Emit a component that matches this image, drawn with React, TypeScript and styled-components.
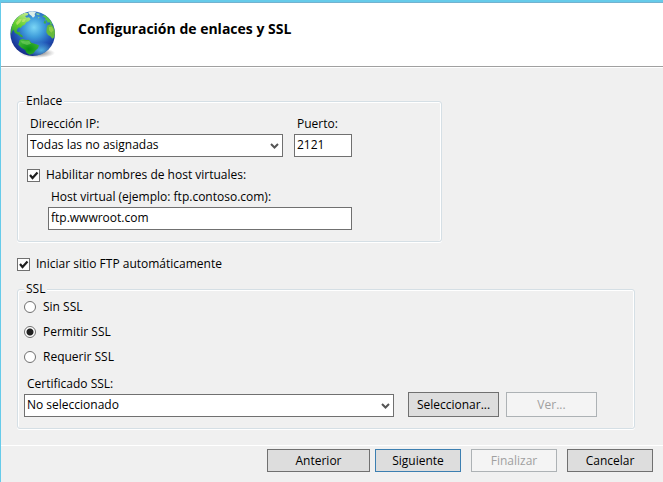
import React, { useId } from "react";
import styled, { createGlobalStyle } from "styled-components";

const GlobalStyle = createGlobalStyle`
  *, *::before, *::after { box-sizing: border-box; }
  html, body, #root { height: 100%; }
  body {
    margin: 0;
    background: #f0f0f0;
    color: #000;
    font: 12px/16px "Open Sans", "Noto Sans", sans-serif;
  }
  button, input, select { font: inherit; color: inherit; margin: 0; }
`;

const Dialog = styled.main`
  min-height: 100%;
  display: flex;
  flex-direction: column;
  border-top: 2px solid #66cbea;
  border-left: 1px solid #66cbea;
  background: #f0f0f0;
`;

const Header = styled.header`
  display: flex;
  align-items: flex-start;
  gap: 22px;
  height: 65px;
  padding: 6px 7px 0;
  background: #fff;
  border-top: 1px solid #74b2cf;
  border-bottom: 1px solid #a0a0a0;
  box-shadow: 0 1px 0 #fff;
`;

const Title = styled.h1`
  margin: 0;
  padding-top: 11px;
  font: 700 14px/18px "Open Sans", "Noto Sans", sans-serif;
`;

const Content = styled.form`
  flex: 1;
  display: flex;
  flex-direction: column;
  align-items: flex-start;
  padding: 26px 28px 16px 16px;
`;

const Group = styled.fieldset<{ $limit?: string }>`
  width: 100%;
  max-width: ${(p) => p.$limit ?? "none"};
  min-width: 0;
  margin: 0;
  padding: 0;
  border: 1px solid #d5dfe5;
  border-radius: 3px;
  box-shadow: inset 1px 1px 0 #fff, inset -1px 0 0 #fff, 0 1px 0 #fff;
`;

const Legend = styled.legend`
  margin-left: 6px;
  padding: 0 2px;
  background: #f0f0f0;
`;

const BindingFields = styled.div`
  display: flex;
  flex-direction: column;
  width: 334px;
  max-width: 100%;
  padding: 7px 0 11px 9px;
`;

const AddressRow = styled.div`
  display: grid;
  grid-template-columns: 1fr 58px;
  column-gap: 11px;
  margin-bottom: 10px;
`;

const Field = styled.div<{ $indent?: string; $tight?: boolean }>`
  display: flex;
  flex-direction: column;
  gap: ${(p) => (p.$tight ? "0" : "2px")};
  min-width: 0;
  padding-left: ${(p) => p.$indent ?? "0"};
`;

const FieldLabel = styled.label`
  padding-left: 3px;
  white-space: nowrap;
`;

const TextBox = styled.input`
  width: 100%;
  height: 23px;
  padding: 0 2px 2px;
  border: 1px solid #707070;
  border-radius: 0;
  background: #fff;
`;

const SelectFrame = styled.div`
  display: grid;
  align-items: center;
  min-width: 0;

  > * { grid-area: 1 / 1; }
  > svg { justify-self: end; margin-right: 4px; pointer-events: none; }
`;

const SelectBox = styled.select`
  appearance: none;
  width: 100%;
  height: 23px;
  padding: 0 16px 1px 2px;
  border: 1px solid #707070;
  border-radius: 0;
  background: #fff;
`;

const ChoiceLabel = styled.label`
  display: inline-flex;
  align-items: center;
  gap: 6px;
  white-space: nowrap;
`;

const HostToggle = styled.div`
  display: flex;
  margin-bottom: 6px;
`;

const CheckMark = styled.span`
  display: grid;
  width: 13px;
  height: 13px;

  > * { grid-area: 1 / 1; }
  > svg { pointer-events: none; visibility: hidden; }
  > input:checked + svg { visibility: visible; }
`;

const CheckInput = styled.input`
  appearance: none;
  width: 13px;
  height: 13px;
  border: 1px solid #707070;
  background: #fff;
`;

const RadioInput = styled.input`
  appearance: none;
  width: 12px;
  height: 12px;
  border: 1px solid #707070;
  border-radius: 50%;
  background: #fff;

  &:checked { background: radial-gradient(circle, #202020 3px, #fff 4px); }
`;

const AutoStart = styled.div`
  display: flex;
  margin: 14px 0 9px;
`;

const SslFields = styled.div`
  display: flex;
  flex-direction: column;
  padding: 0 37px 11px 6px;
`;

const RadioList = styled.div`
  display: flex;
  flex-direction: column;
  align-items: flex-start;
  gap: 9px;
  margin: 2px 0 11px;

  ${ChoiceLabel} { gap: 7px; }
`;

const CertificateRow = styled.div`
  display: flex;
  align-items: flex-end;
  gap: 7px;

  > ${SelectFrame} { flex: 1; margin-right: 7px; }
`;

const Button = styled.button<{ $width: string; $primary?: boolean; $tall?: boolean }>`
  width: ${(p) => p.$width};
  height: ${(p) => (p.$tall ? "25px" : "23px")};
  padding: 0;
  border: 1px solid ${(p) => (p.$primary ? "#3c7fb1" : "#707070")};
  border-radius: 0;
  background: #ddd;
  white-space: nowrap;

  &:disabled {
    border-color: #adb2b5;
    background: #f4f4f4;
    color: #a0a0a0;
  }
`;

const Footer = styled.footer`
  display: flex;
  justify-content: flex-end;
  gap: 10px;
  padding: 3px 10px 10px;
  border-top: 1px solid #fff;
`;

const StepButtons = styled.div`
  display: flex;
  gap: 5px;
`;

function Globe() {
  return (
    <svg width="48" height="50" viewBox="24 27 144 150" aria-hidden="true">
      <defs>
        <radialGradient id="sea" cx="0.53" cy="0.36" r="0.62">
          <stop offset="0" stopColor="#7bd6f5" />
          <stop offset="0.35" stopColor="#3f9ddb" />
          <stop offset="0.7" stopColor="#2156b8" />
          <stop offset="1" stopColor="#182f8c" />
        </radialGradient>
        <linearGradient id="north" x1="0.6" y1="0" x2="0.2" y2="1">
          <stop offset="0" stopColor="#b5e683" />
          <stop offset="0.5" stopColor="#63cf2d" />
          <stop offset="1" stopColor="#249638" />
        </linearGradient>
        <radialGradient id="south" cx="0.5" cy="0.65" r="0.65">
          <stop offset="0" stopColor="#078d12" />
          <stop offset="1" stopColor="#43b93a" />
        </radialGradient>
        <radialGradient id="glow">
          <stop offset="0" stopColor="#5bc9ef" stopOpacity="0.8" />
          <stop offset="1" stopColor="#5bc9ef" stopOpacity="0" />
        </radialGradient>
        <radialGradient id="shade">
          <stop offset="0" stopColor="#333" stopOpacity="0.75" />
          <stop offset="1" stopColor="#555" stopOpacity="0" />
        </radialGradient>
        <clipPath id="disc"><circle cx="98" cy="101" r="67" /></clipPath>
      </defs>
      <ellipse cx="111" cy="159" rx="54" ry="15" fill="url(#shade)" />
      <circle cx="98" cy="101" r="67" fill="url(#sea)" />
      <g clipPath="url(#disc)">
        <ellipse cx="124" cy="151" rx="42" ry="25" fill="url(#glow)" />
        <path d="M33 104 L34 79 L43 61 L58 45 L75 38 L86 40 L83 46 L75 48 L80 53 L87 52 L92 58 L86 64 L79 67 L74 74 L67 77 L62 84 L57 82 L52 87 L50 94 L55 97 L61 96 L59 102 L66 105 L69 112 L63 111 L55 104 L45 99 L40 89 L37 94 Z" fill="url(#north)" />
        <path d="M48 68 L58 57 L66 56 L61 66 L51 76 Z M68 56 L78 57 L73 66 L66 66 Z" fill="#c1e66e" opacity="0.75" />
        <path d="M85 36 L97 32 L108 37 L104 42 L105 48 L99 53 L94 47 L88 43 Z" fill="#dceee8" />
        <path d="M109 39 L119 41 L118 46 L110 44 Z M113 50 L119 52 L116 56 Z" fill="#84ce90" />
        <path d="M126 48 L137 45 L151 59 L158 74 L151 73 L148 66 L143 68 L140 61 L134 62 L137 55 Z" fill="#55c34a" />
        <path d="M133 62 L139 65 L136 72 L131 69 Z" fill="#3cad46" />
        <path d="M143 76 L151 73 L158 77 L166 94 L163 112 L157 116 L151 109 L144 105 L139 97 L140 85 Z" fill="#66ba3b" />
        <path d="M147 81 L156 80 L161 91 L154 98 L147 91 Z" fill="#a3d74f" opacity="0.7" />
        <path d="M59 120 L67 117 L78 120 L87 119 L94 128 L104 131 L117 136 L114 145 L107 151 L100 160 L89 164 L80 159 L75 149 L64 143 L55 134 Z" fill="url(#south)" />
        <path d="M62 122 L77 124 L88 123 L93 131 L81 135 L66 130 Z" fill="#86d76d" opacity="0.5" />
      </g>
    </svg>
  );
}

function Chevron() {
  return (
    <svg width="9" height="8" viewBox="0 0 9 8" aria-hidden="true">
      <path d="M1 2 L4.5 5.5 L8 2" fill="none" stroke="#555" strokeWidth="2" />
    </svg>
  );
}

function Checkbox({ label }: { label: string }) {
  return (
    <ChoiceLabel>
      <CheckMark>
        <CheckInput type="checkbox" defaultChecked />
        <svg width="13" height="13" viewBox="0 0 13 13" aria-hidden="true">
          <path d="M3 6 L5.5 9 L10.5 3.5" fill="none" stroke="#202020" strokeWidth="2.2" />
        </svg>
      </CheckMark>
      {label}
    </ChoiceLabel>
  );
}

function Dropdown({ id, value }: { id: string; value: string }) {
  return (
    <SelectFrame>
      <SelectBox id={id} defaultValue={value}>
        <option>{value}</option>
      </SelectBox>
      <Chevron />
    </SelectFrame>
  );
}

const sslModes = ["Sin SSL", "Permitir SSL", "Requerir SSL"];

export default function App() {
  const id = useId();
  return (
    <>
      <GlobalStyle />
      <Dialog>
        <Header>
          <Globe />
          <Title>Configuración de enlaces y SSL</Title>
        </Header>
        <Content>
          <Group $limit="425px">
            <Legend>Enlace</Legend>
            <BindingFields>
              <AddressRow>
                <Field>
                  <FieldLabel htmlFor={`${id}-ip`}>Dirección IP:</FieldLabel>
                  <Dropdown id={`${id}-ip`} value="Todas las no asignadas" />
                </Field>
                <Field>
                  <FieldLabel htmlFor={`${id}-port`}>Puerto:</FieldLabel>
                  <TextBox id={`${id}-port`} defaultValue="2121" />
                </Field>
              </AddressRow>
              <HostToggle>
                <Checkbox label="Habilitar nombres de host virtuales:" />
              </HostToggle>
              <Field $indent="21px">
                <FieldLabel htmlFor={`${id}-host`}>Host virtual (ejemplo: ftp.contoso.com):</FieldLabel>
                <TextBox id={`${id}-host`} defaultValue="ftp.wwwroot.com" />
              </Field>
            </BindingFields>
          </Group>
          <AutoStart>
            <Checkbox label="Iniciar sitio FTP automáticamente" />
          </AutoStart>
          <Group>
            <Legend>SSL</Legend>
            <SslFields>
              <RadioList>
                {sslModes.map((mode) => (
                  <ChoiceLabel key={mode}>
                    <RadioInput type="radio" name="ssl" defaultChecked={mode === "Permitir SSL"} />
                    {mode}
                  </ChoiceLabel>
                ))}
              </RadioList>
              <Field $tight>
                <FieldLabel htmlFor={`${id}-cert`}>Certificado SSL:</FieldLabel>
                <CertificateRow>
                  <Dropdown id={`${id}-cert`} value="No seleccionado" />
                  <Button type="button" $width="91px" $tall>Seleccionar...</Button>
                  <Button type="button" $width="91px" $tall disabled>Ver...</Button>
                </CertificateRow>
              </Field>
            </SslFields>
          </Group>
        </Content>
        <Footer>
          <StepButtons>
            <Button type="button" $width="103px">Anterior</Button>
            <Button type="button" $width="86px" $primary>Siguiente</Button>
          </StepButtons>
          <Button type="button" $width="86px" disabled>Finalizar</Button>
          <Button type="button" $width="86px">Cancelar</Button>
        </Footer>
      </Dialog>
    </>
  );
}
